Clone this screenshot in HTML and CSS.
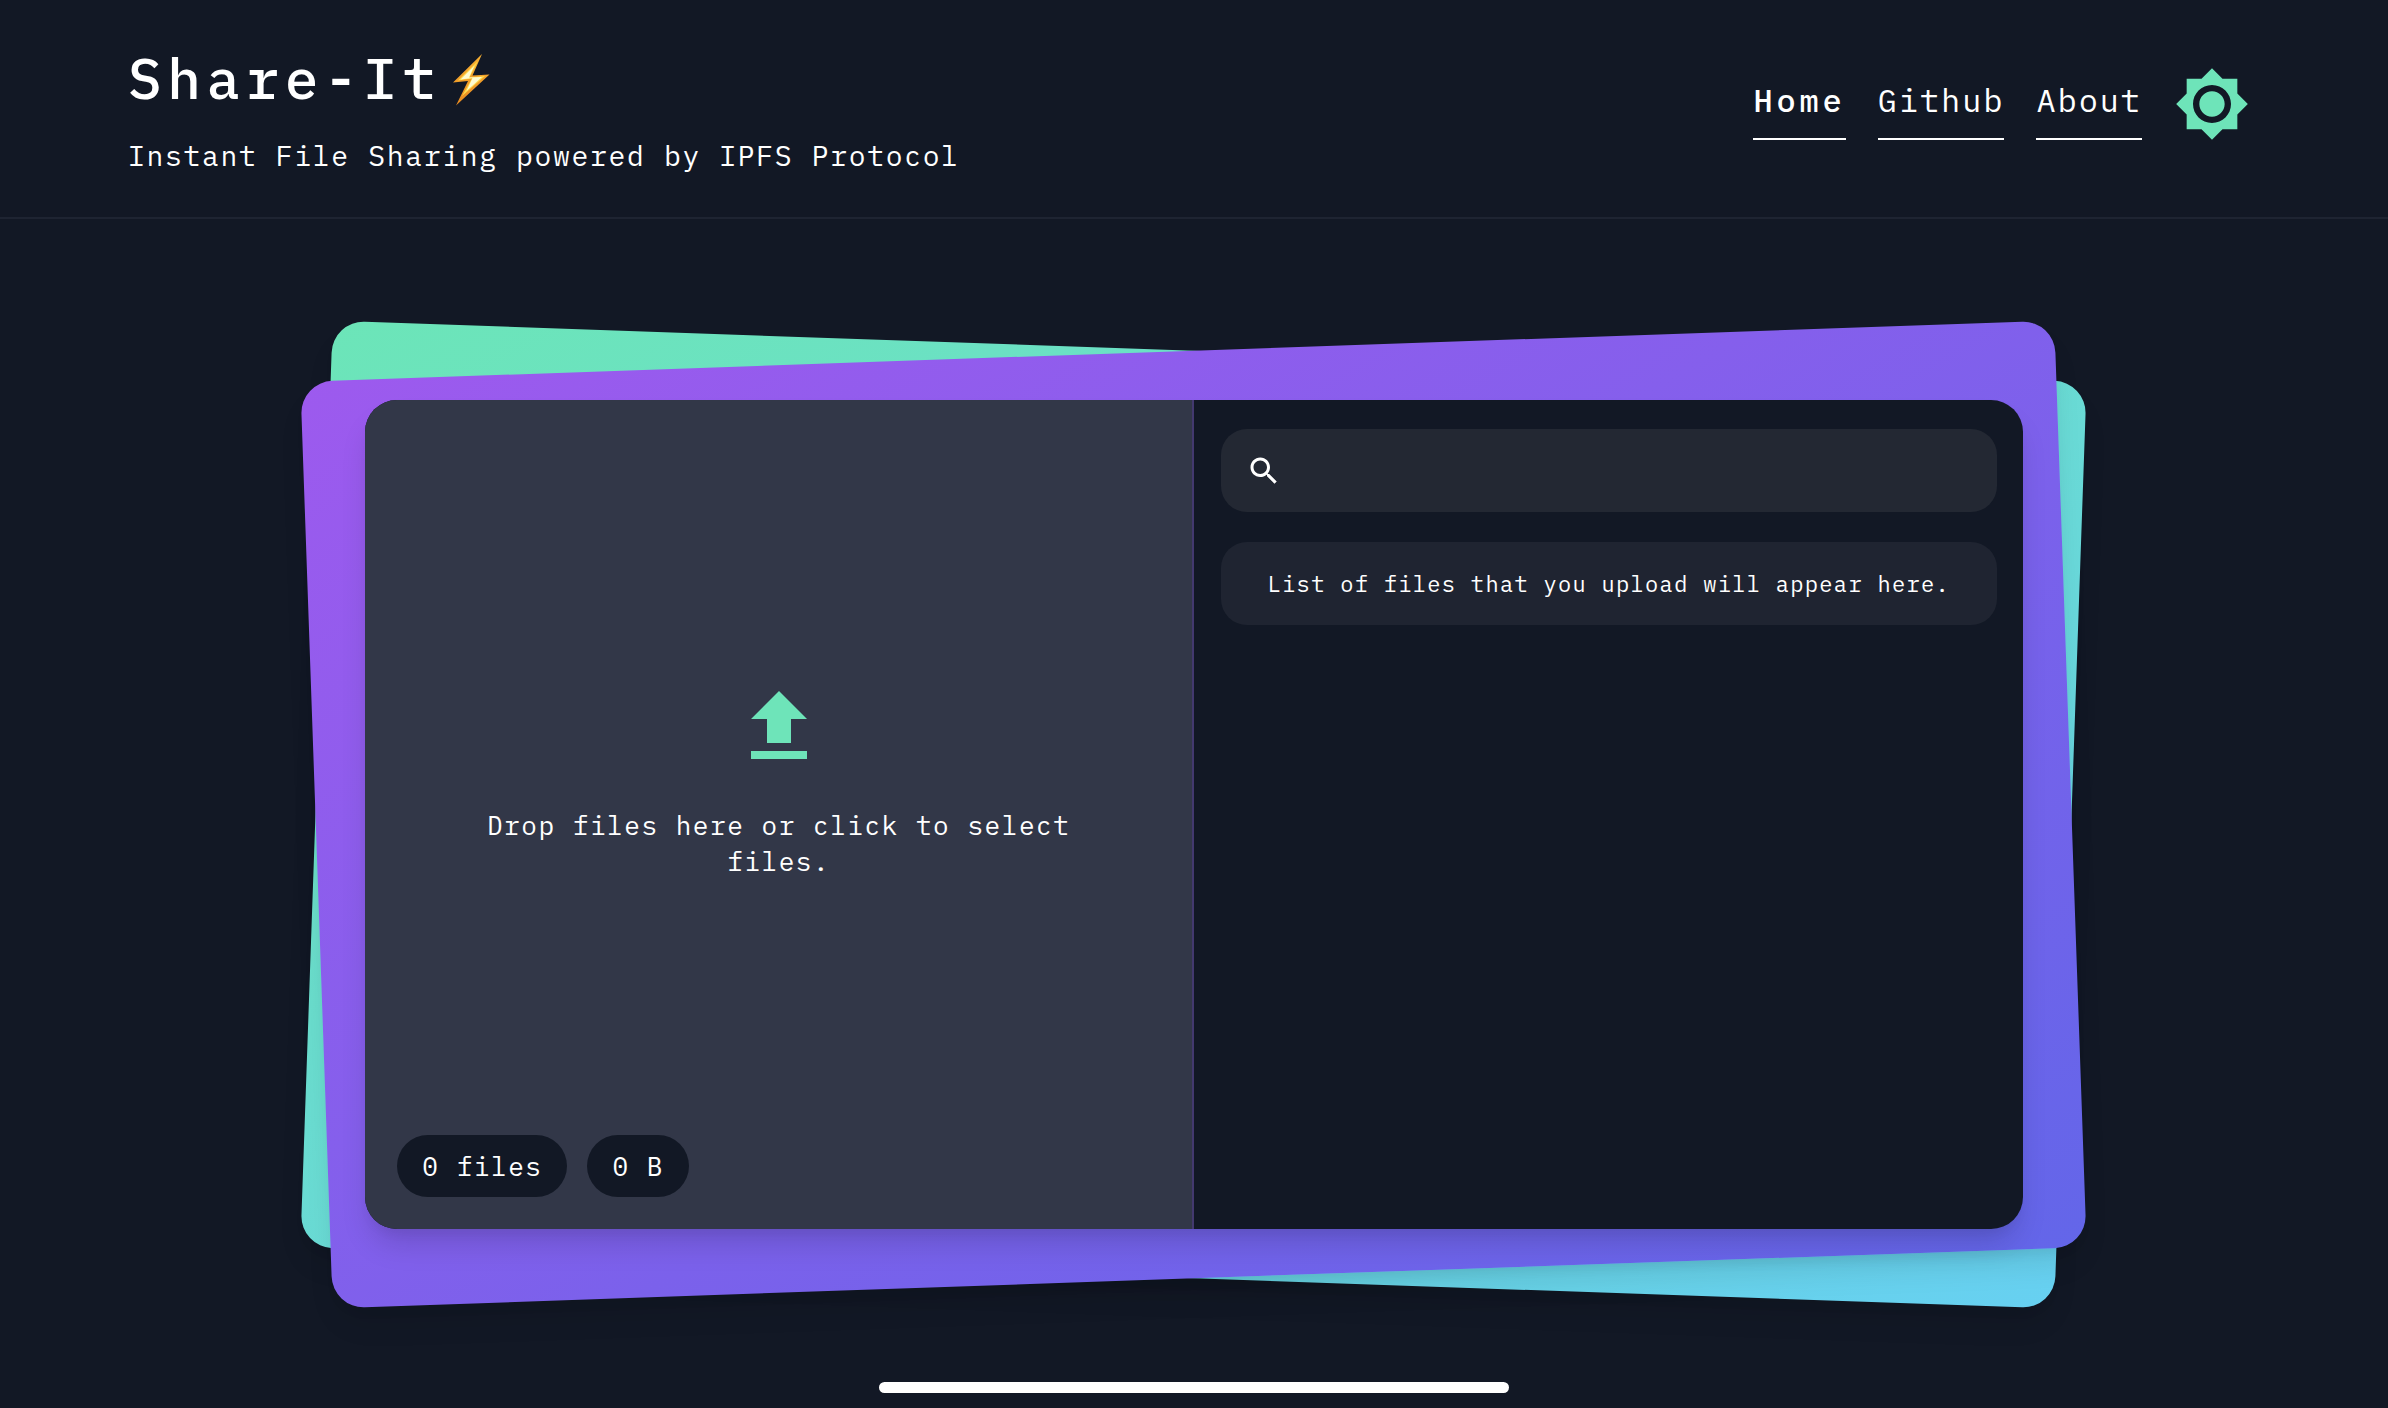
FILE: index.html
```html
<!DOCTYPE html>
<html lang="en">
<head>
  <meta charset="utf-8">
  <meta name="viewport" content="width=device-width, initial-scale=1">
  <title>Share-It</title>
  <link rel="stylesheet" href="styles.css">
</head>
<body>
  <header class="header">
    <div class="brand">
      <h1 class="brand-title">Share-It<svg class="brand-bolt" viewBox="0 0 38 54" aria-hidden="true">
        <defs>
          <linearGradient id="bolt" x1="0" y1="0" x2="0" y2="1">
            <stop offset="0" stop-color="#f9b233"/>
            <stop offset="1" stop-color="#e98a1f"/>
          </linearGradient>
        </defs>
        <path d="M30 1 1 29.500 16 28 4 52.500 37.500 21.500 20.500 22.500z" fill="url(#bolt)"/>
        <path d="M26 8 6 27.500 20 25.500 10 43 33 23 17.500 24.500z" fill="#fdd94a"/>
        <path d="M22.500 12.500 8.500 26.500 20.500 25 14.500 38 30 24 17 24.500z" fill="#fffbd0"/>
      </svg></h1>
      <p class="brand-tagline">Instant File Sharing powered by IPFS Protocol</p>
    </div>
    <nav class="nav">
      <a class="nav-link nav-link-active" href="#home">Home</a>
      <a class="nav-link" href="#github">Github</a>
      <a class="nav-link" href="#about">About</a>
      <button class="theme-toggle" type="button" aria-label="Toggle theme">
        <svg class="theme-icon" viewBox="0 0 24 24" aria-hidden="true"><path fill="currentColor" d="M20 8.690V4h-4.690L12 .690 8.690 4H4v4.690L.690 12 4 15.310V20h4.690L12 23.310 15.310 20H20v-4.690L23.310 12 20 8.690zM12 18c-3.310 0-6-2.690-6-6s2.690-6 6-6 6 2.690 6 6-2.690 6-6 6zm0-10c-2.210 0-4 1.790-4 4s1.790 4 4 4 4-1.790 4-4-1.790-4-4-4z"/></svg>
      </button>
    </nav>
  </header>

  <main class="main">
    <div class="stage">
      <div class="layer layer-green"></div>
      <div class="layer layer-purple"></div>
      <div class="card">
        <section class="drop">
          <button class="drop-zone" type="button">
            <svg class="drop-icon" viewBox="0 0 24 24" aria-hidden="true"><path fill="currentColor" d="M9 16h6v-6h4l-7-7-7 7h4zm-4 2h14v2H5z"/></svg>
            <span class="drop-text">Drop files here or click to select files.</span>
          </button>
          <div class="stats">
            <span class="pill">0 files</span>
            <span class="pill">0 B</span>
          </div>
        </section>
        <section class="files">
          <label class="search">
            <svg class="search-icon" viewBox="0 0 24 24" aria-hidden="true"><path fill="currentColor" d="M15.500 14h-.790l-.280-.270C15.410 12.590 16 11.110 16 9.500 16 5.910 13.090 3 9.500 3S3 5.910 3 9.500 5.910 16 9.500 16c1.610 0 3.090-.590 4.230-1.570l.270.280v.790l5 4.990L20.490 19l-4.990-5zm-6 0C7.010 14 5 11.990 5 9.500S7.010 5 9.500 5 14 7.010 14 9.500 11.990 14 9.500 14z"/></svg>
            <input class="search-input" type="search" aria-label="Search files">
          </label>
          <p class="empty">List of files that you upload will appear here.</p>
        </section>
      </div>
    </div>
  </main>
  <div class="home-indicator"></div>
</body>
</html>
```
FILE: styles.css
```css
* {
  box-sizing: border-box;
}

body {
  display: flex;
  flex-direction: column;
  min-height: 100vh;
  margin: 0;
  overflow-x: hidden;
  background: #121825;
  color: #fff;
  font-family: "IBM Plex Mono", "Liberation Mono", monospace;
  font-size: 26px;
  line-height: 36px;
}

h1,
p {
  margin: 0;
}

button,
input {
  padding: 0;
  border: 0;
  background: none;
  color: inherit;
  font: inherit;
}

button {
  cursor: pointer;
}

.header {
  display: flex;
  align-items: center;
  justify-content: space-between;
  padding: 42px 138px 41px 128px;
  border-bottom: 2px solid #1e2432;
}

.brand {
  display: flex;
  flex-direction: column;
  gap: 22px;
}

.brand-title {
  display: flex;
  align-items: center;
  gap: 10px;
  font-size: 56px;
  font-weight: 500;
  line-height: 72px;
  letter-spacing: 0.1em;
}

.brand-bolt {
  width: 38px;
  height: 54px;
  margin-top: 4px;
}

.brand-tagline {
  font-size: 28px;
  line-height: 40px;
  letter-spacing: 0.06em;
}

.nav {
  display: flex;
  align-items: center;
  gap: 32px;
  margin-bottom: 10px;
}

.nav-link {
  padding: 8px 0 14px;
  border-bottom: 2px solid #fff;
  color: inherit;
  font-size: 32px;
  line-height: 48px;
  letter-spacing: 0.06em;
  text-decoration: none;
}

.nav-link-active {
  font-weight: 500;
  letter-spacing: 0.12em;
}

.theme-toggle {
  display: flex;
  color: #6ee4b9;
}

.theme-icon {
  width: 76px;
  height: 76px;
}

.main {
  display: flex;
  flex: 1;
  align-items: center;
  justify-content: center;
  padding-top: 2px;
}

.stage {
  position: relative;
  width: 69.4%;
}

.layer {
  position: absolute;
  inset: -49px;
  border-radius: 32px;
  box-shadow: 0 20px 30px -6px rgba(0, 0, 0, 0.1), 0 8px 12px -4px rgba(0, 0, 0, 0.05);
}

.layer-green {
  background: linear-gradient(to bottom right, #6ce5b8, #67d0f1);
  transform: rotate(2deg);
}

.layer-purple {
  background: linear-gradient(to bottom right, #9d5aee, #6366e9);
  transform: rotate(-2deg);
}

.card {
  position: relative;
  display: grid;
  grid-template-columns: 1fr 1fr;
  min-height: 829px;
  overflow: hidden;
  border-radius: 32px;
  background: #121825;
  box-shadow: 0 20px 30px -6px rgba(0, 0, 0, 0.15), 0 8px 12px -4px rgba(0, 0, 0, 0.05);
}

.drop {
  display: flex;
  flex-direction: column;
  padding: 32px;
  border-right: 2px solid #43396f;
  background: #323748;
}

.drop-zone {
  display: flex;
  flex: 1;
  flex-direction: column;
  align-items: center;
  justify-content: center;
  gap: 32px;
  padding: 0 64px 10px;
}

.drop-icon {
  width: 96px;
  height: 96px;
  color: #6ee4b9;
}

.drop-text {
  letter-spacing: 0.06em;
  text-align: center;
}

.stats {
  display: flex;
  gap: 20px;
}

.pill {
  padding: 13px 25px;
  border-radius: 31px;
  background: #121825;
  letter-spacing: 0.06em;
}

.files {
  display: flex;
  flex-direction: column;
  gap: 30px;
  padding: 29px 26px 29px 27px;
}

.search {
  display: flex;
  align-items: center;
  gap: 16px;
  min-height: 83px;
  padding: 0 25px;
  border-radius: 26px;
  background: #232833;
}

.search-icon {
  width: 36px;
  height: 36px;
}

.search-input {
  flex: 1;
  min-width: 0;
  outline: none;
}

.empty {
  display: flex;
  align-items: center;
  justify-content: center;
  min-height: 83px;
  padding: 0 24px;
  border-radius: 26px;
  background: #1f2431;
  font-size: 22px;
  letter-spacing: 0.06em;
}

.home-indicator {
  position: fixed;
  bottom: 15px;
  left: 50%;
  width: 630px;
  height: 11px;
  margin-left: -315px;
  border-radius: 6px;
  background: #fff;
}
```
